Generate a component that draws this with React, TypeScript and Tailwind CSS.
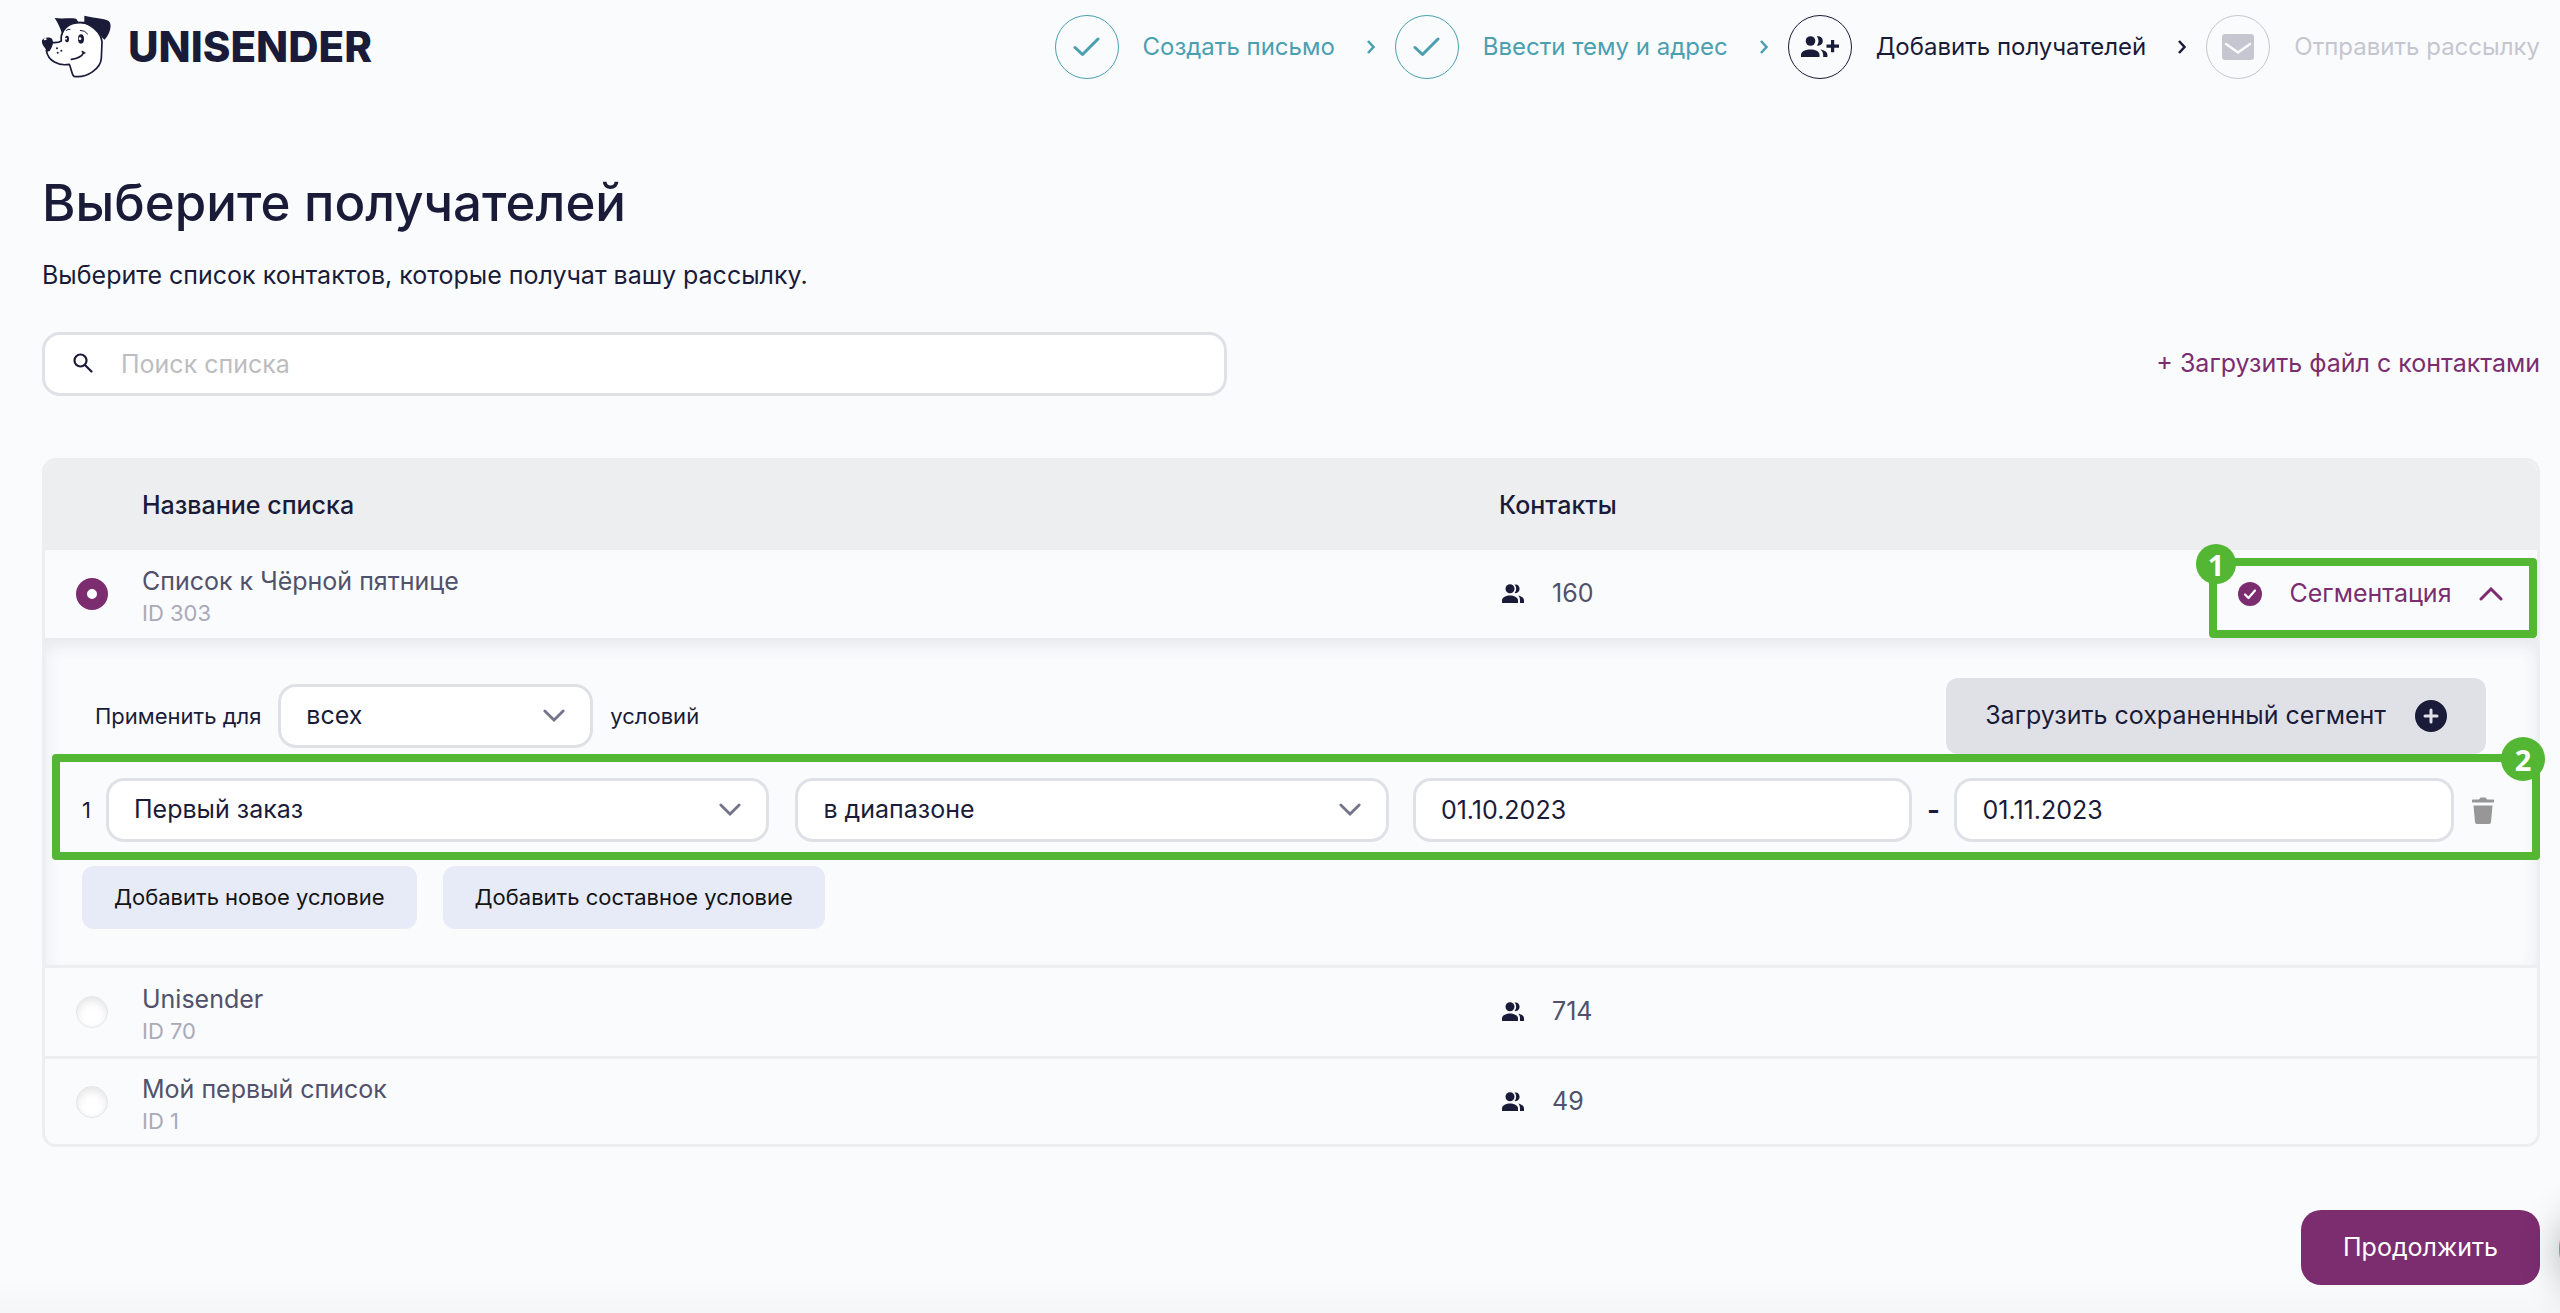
import { Fragment, useState, type ReactNode } from 'react';

const STEPS = [
  { label: 'Создать письмо', state: 'done' },
  { label: 'Ввести тему и адрес', state: 'done' },
  { label: 'Добавить получателей', state: 'current' },
  { label: 'Отправить рассылку', state: 'next' },
];

const STEP_COLORS: Record<string, string> = {
  done: 'text-[#4a9fb0]',
  current: 'text-[#191b38]',
  next: 'text-[#c6c6d0]',
};

const LISTS = [
  { id: 303, name: 'Список к Чёрной пятнице', contacts: 160 },
  { id: 70, name: 'Unisender', contacts: 714 },
  { id: 1, name: 'Мой первый список', contacts: 49 },
];

const FIELD = 'h-16 w-full rounded-[18px] border-3 border-[#e0e1e7] bg-white text-[25px] text-[#191b38] outline-none';

function DogLogo() {
  return (
    <svg viewBox="126 42 210 192" className="h-16 w-[70px]" fill="none" stroke="#191b38" strokeWidth="5" strokeLinecap="round" strokeLinejoin="round">
      <path fill="#fff" d="M152 124 C165 126 178 124 184 120 C182 108 186 94 194 84 C208 66 246 58 268 72 C292 86 304 104 306 122 L304 172 C302 202 262 232 222 226 C214 218 214 202 208 190 C176 196 144 180 139 148 Z" />
      <path fill="#191b38" stroke="none" d="M164 51 C186 54 210 50 228 53 C232 56 232 60 236 62 L253 62 L253 44 C282 52 310 50 326 60 C338 72 330 98 314 116 C306 112 300 98 288 86 C272 68 240 62 214 69 C198 75 190 86 188 104 L182 86 C178 76 172 62 164 51 Z" />
      <path fill="#191b38" stroke="none" d="M126 118 C132 108 148 107 156 113 C162 124 158 136 149 150 L142 152 C138 142 124 134 126 118 Z" />
      <path fill="#fff" stroke="none" d="M131 116 a5 4 0 0 1 9 -3 a5 4 0 0 1 -9 3 Z" />
      <ellipse cx="201" cy="114" rx="6" ry="10" fill="#191b38" stroke="none" />
      <ellipse cx="243" cy="114" rx="9" ry="14" fill="#191b38" stroke="none" />
      <circle cx="198" cy="113" r="3" fill="#fff" stroke="none" />
      <circle cx="240" cy="113" r="4" fill="#fff" stroke="none" />
      <path strokeWidth="3" d="M199 88 Q204 84 210 85 M241 88 Q256 88 263 99" />
      <path strokeWidth="5" d="M214 175 C232 173 246 166 251 155 M247 152 L254 156" />
      <g fill="#191b38" stroke="none">
        <circle cx="171" cy="142" r="3" />
        <circle cx="184" cy="149" r="3" />
        <circle cx="173" cy="155" r="3" />
      </g>
    </svg>
  );
}

function People({ className }: { className?: string }) {
  return (
    <svg viewBox="0 0 22 20" className={className} fill="currentColor" aria-hidden="true">
      <circle cx="8" cy="4.8" r="4.5" />
      <path d="M0 19v-2.600c0-3.400 4.400-5 8-5s8 1.600 8 5V19z" />
      <path d="M12.600.5c3-.6 5 1.600 5 4.300s-2 4.900-5 4.300c1-1.200 1.500-2.600 1.500-4.300S13.600 1.700 12.600.5z" />
      <path d="M16.300 11.600c3 .7 5.700 2.200 5.700 4.800V19h-4v-2.600c0-2-.6-3.600-1.700-4.800z" />
    </svg>
  );
}

function PeoplePlus() {
  return (
    <svg viewBox="0 0 38 22" className="h-[22px] w-[38px]" fill="currentColor" aria-hidden="true">
      <circle cx="9.5" cy="5" r="4.8" />
      <path d="M0 21v-2c0-4 5-5.500 9.500-5.500S18.500 15 18.500 19v2z" />
      <path d="M15.800.4c3.800-.6 6 1.800 6 4.600s-2.200 5.200-6 4.600c1.100-1.300 1.700-2.800 1.700-4.600s-.6-3.300-1.700-4.600z" />
      <path d="M19.500 13.500c3.800.6 6.900 2.300 6.900 5.300V21h-4.200v-2c0-2.200-1-4-2.700-5.500z" />
      <path d="M30 4h3.200v4.600H38v3.100h-4.800v4.600H30v-4.600h-4.500V8.600H30z" />
    </svg>
  );
}

function StepIcon({ state }: { state: string }) {
  if (state === 'done') {
    return (
      <svg viewBox="0 0 28 20" className="h-5 w-7" fill="none" stroke="currentColor" strokeWidth="3" strokeLinecap="round" strokeLinejoin="round">
        <path d="M2 10.500 9.500 17.500 25 2" />
      </svg>
    );
  }
  if (state === 'current') return <PeoplePlus />;
  return (
    <svg viewBox="0 0 32 26" className="h-[26px] w-8">
      <rect width="32" height="26" rx="3" fill="currentColor" />
      <path d="M4 10 16 18.500 28 10" fill="none" stroke="#fafbfd" strokeWidth="2.5" strokeLinecap="round" />
    </svg>
  );
}

function Chevron({ d, className }: { d: string; className: string }) {
  return (
    <svg viewBox="0 0 24 14" className={className} fill="none" stroke="currentColor" strokeWidth="3" strokeLinecap="round" aria-hidden="true">
      <path d={d} />
    </svg>
  );
}

function Select({ label, value, className }: { label: string; value: string; className: string }) {
  return (
    <div className={`relative ${className}`}>
      <select aria-label={label} defaultValue={value} className={`${FIELD} appearance-none px-[25px]`}>
        <option>{value}</option>
      </select>
      <Chevron d="M2 2 12 12 22 2" className="pointer-events-none absolute top-[25px] right-7 h-[13px] w-[22px] text-[#74758a]" />
    </div>
  );
}

function Marker({ children, className }: { children: ReactNode; className: string }) {
  return (
    <span className={`absolute flex items-center justify-center rounded-full bg-[#53b734] font-['Open_Sans',sans-serif] text-[29px] leading-none font-bold text-white ${className}`}>{children}</span>
  );
}

function SegmentPanel() {
  return (
    <div className="bg-[#fafbfd] pt-10 pr-[31px] pb-9 pl-[37px] shadow-[inset_0_8px_16px_rgba(40,42,60,0.09)]">
      <div className="flex items-center justify-between pr-5">
        <div className="flex items-center gap-[17px] pl-[13px] text-[22px]">
          <span>Применить для</span>
          <Select label="Применить для" value="всех" className="w-[315px]" />
          <span>условий</span>
        </div>
        <button className="flex h-[76px] items-center gap-[29px] rounded-xl bg-[#e0e1e6] px-[39px] text-[25px]">
          Загрузить сохраненный сегмент
          <svg viewBox="0 0 32 32" className="size-8">
            <circle cx="16" cy="16" r="16" fill="#191b38" />
            <path d="M16 10v12M10 16h12" stroke="#e0e1e6" strokeWidth="3" strokeLinecap="round" />
          </svg>
        </button>
      </div>

      <div className="relative mt-6 flex items-center">
        <div className="pointer-events-none absolute -top-6 -right-[34px] -bottom-[18px] -left-[30px] rounded-sm border-8 border-[#53b734]">
          <Marker className="-top-[25px] -right-[13px] size-11">2</Marker>
        </div>
        <span className="w-6 text-[22px]">1</span>
        <Select label="Условие" value="Первый заказ" className="flex-[664]" />
        <Select label="Оператор" value="в диапазоне" className="ml-[26px] flex-[594]" />
        <div className="ml-6 flex-[500]">
          <input aria-label="Начало периода" defaultValue="01.10.2023" className={`${FIELD} px-[25px]`} />
        </div>
        <span className="w-[42px] text-center text-[28px] font-semibold">-</span>
        <div className="flex-[500]">
          <input aria-label="Конец периода" defaultValue="01.11.2023" className={`${FIELD} px-[25px]`} />
        </div>
        <button aria-label="Удалить условие" className="mr-3 ml-[18px] text-[#979797]">
          <svg viewBox="0 0 22 27" className="h-[27px] w-[22px]" fill="currentColor">
            <path d="M1 2.500h6L8.500.5h5L15 2.500h6a1 1 0 0 1 0 3H1a1 1 0 0 1 0-3z" />
            <path d="M1.500 8.500h19L19 25a2 2 0 0 1-2 2H5a2 2 0 0 1-2-2z" />
          </svg>
        </button>
      </div>

      <div className="mt-6 flex gap-[26px] text-[22px] text-[#141414]">
        <button className="h-[63px] rounded-xl bg-[#e7eaf7] px-8">Добавить новое условие</button>
        <button className="h-[63px] rounded-xl bg-[#e7eaf7] px-8">Добавить составное условие</button>
      </div>
    </div>
  );
}

export default function App() {
  const [selected, setSelected] = useState(303);

  return (
    <div className="relative flex min-h-screen flex-col overflow-hidden bg-[#fafbfd] pr-5 pl-[42px] font-['Inter',sans-serif] text-[#191b38]">
      <header className="flex items-center justify-between pt-[15px]">
        <a href="#" className="flex items-center gap-4 text-[42px] leading-none font-extrabold">
          <DogLogo />
          UNISENDER
        </a>
        <nav className="flex items-center text-[24px]">
          {STEPS.map((step, i) => (
            <div key={step.label} className={`flex items-center ${STEP_COLORS[step.state]}`}>
              <span className="flex size-16 items-center justify-center rounded-full border border-current">
                <StepIcon state={step.state} />
              </span>
              <a href="#" className="ml-6">{step.label}</a>
              {i < STEPS.length - 1 && (
                <svg viewBox="0 0 8 14" className="mr-5 ml-8 h-[14px] w-2" fill="none" stroke="currentColor" strokeWidth="2.5">
                  <path d="M1 1 6.500 7 1 13" />
                </svg>
              )}
            </div>
          ))}
        </nav>
      </header>

      <h1 className="mt-[92px] text-[51px] leading-16 font-medium">Выберите получателей</h1>
      <p className="mt-6 text-[25px] leading-8">Выберите список контактов, которые получат вашу рассылку.</p>

      <div className="mt-[41px] flex items-center justify-between">
        <div className="relative w-[1185px]">
          <svg viewBox="0 0 20 20" className="absolute top-[21px] left-[31px] size-5" fill="none" stroke="currentColor" strokeWidth="2.2" strokeLinecap="round">
            <circle cx="7.5" cy="7.5" r="6" />
            <path d="M12 12 18.500 18.500" />
          </svg>
          <input type="search" aria-label="Поиск списка" placeholder="Поиск списка" className={`${FIELD} pr-6 pl-[76px] placeholder:text-[#bdbdc0]`} />
        </div>
        <a href="#" className="text-[25px] text-[#7b2d70]">+ Загрузить файл с контактами</a>
      </div>

      <table className="mt-[62px] w-full table-fixed border-separate border-spacing-0 rounded-[14px] border-3 border-[#edeef0] text-left">
        <thead className="bg-[#edeef0] text-[25px]">
          <tr className="h-[89px]">
            <td className="w-[97px] rounded-tl-xl" />
            <th className="font-medium">Название списка</th>
            <th className="w-[663px] font-medium">Контакты</th>
            <td className="w-[375px] rounded-tr-xl" />
          </tr>
        </thead>
        <tbody>
          {LISTS.map((list, i) => (
            <Fragment key={list.id}>
              <tr className="h-[88px]">
                <td className={`pl-[31px] ${i === 2 ? 'border-t-3 border-[#edeef0]' : ''}`}>
                  <input
                    type="radio"
                    name="list"
                    id={`list-${list.id}`}
                    checked={selected === list.id}
                    onChange={() => setSelected(list.id)}
                    className="block size-8 appearance-none rounded-full border border-[#e3e4e8] bg-white shadow-[inset_0_4px_8px_rgba(0,0,0,0.1)] checked:border-[11px] checked:border-[#7b2d70] checked:shadow-none"
                  />
                </td>
                <td className={i === 2 ? 'border-t-3 border-[#edeef0]' : ''}>
                  <label htmlFor={`list-${list.id}`} className="block pt-0.5 text-[25px] leading-9 text-[#50516a]">{list.name}</label>
                  <span className="block text-[22px] leading-7 text-[#a9aab8]">ID {list.id}</span>
                </td>
                <td className={i === 2 ? 'border-t-3 border-[#edeef0]' : ''}>
                  <span className="flex items-center gap-7 pl-[3px] text-[25px] text-[#50516a]">
                    <People className="h-5 w-[22px] text-[#191b38]" />
                    {list.contacts}
                  </span>
                </td>
                <td className={i === 2 ? 'border-t-3 border-[#edeef0]' : ''}>
                  {i === 0 && (
                    <div className="relative z-10 ml-auto w-[328px]">
                      <div className="pointer-events-none absolute inset-x-0 -top-2 -bottom-4 rounded-sm border-8 border-[#53b734]">
                        <Marker className="-top-[22px] -left-[21px] size-10">1</Marker>
                      </div>
                      <button className="flex h-14 w-full items-center justify-between pr-[34px] pl-[29px] text-[25px] text-[#7b2d70]">
                        <svg viewBox="0 0 24 24" className="size-6">
                          <circle cx="12" cy="12" r="12" fill="#7b2d70" />
                          <path d="M7 12.500 10.500 16 17 8.500" fill="none" stroke="#fff" strokeWidth="2.2" strokeLinecap="round" strokeLinejoin="round" />
                        </svg>
                        Сегментация
                        <Chevron d="M2 12 12 2 22 12" className="h-[14px] w-6" />
                      </button>
                    </div>
                  )}
                </td>
              </tr>
              {i === 0 && (
                <tr>
                  <td colSpan={4} className="border-b-3 border-[#edeef0] p-0"><SegmentPanel /></td>
                </tr>
              )}
            </Fragment>
          ))}
        </tbody>
      </table>

      <div className="mt-[63px] flex justify-end">
        <button className="h-[75px] rounded-[20px] bg-[#7b2d70] px-[42px] text-[25px] text-white">Продолжить</button>
      </div>

      <div className="pointer-events-none absolute inset-x-0 bottom-0 h-8 bg-linear-to-b from-transparent to-black/2" />
      <button aria-label="Чат" className="absolute -right-[79px] bottom-[24px] size-20 rounded-full bg-[#3fb0a5] shadow-[0_4px_40px_rgba(0,0,0,0.3)]" />
    </div>
  );
}
